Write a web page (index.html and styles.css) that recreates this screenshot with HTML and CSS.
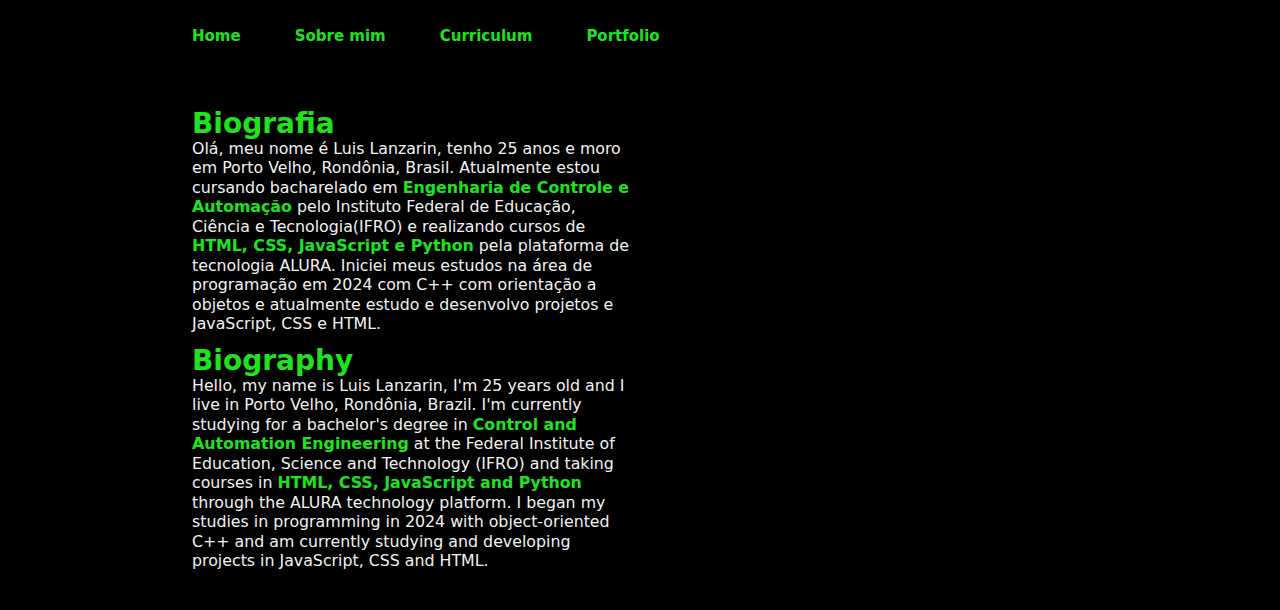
FILE: index.html
```html
<!DOCTYPE html>
<html lang="pt-BR">
<head>
<meta charset="utf-8">
<title>Luis Lanzarin</title>
<link rel="stylesheet" href="styles.css">
</head>
<body>
<header class="cabecalho">
  <nav class="menu">
    <a class="menu__link" href="#">Home</a>
    <a class="menu__link" href="#">Sobre mim</a>
    <a class="menu__link" href="#">Curriculum</a>
    <a class="menu__link" href="#">Portfolio</a>
  </nav>
</header>
<main class="conteudo">
  <section class="bio">
    <h1 class="bio__titulo">Biografia</h1>
    <p class="bio__texto">Olá, meu nome é Luis Lanzarin, tenho 25 anos e moro em Porto Velho, Rondônia, Brasil. Atualmente estou cursando bacharelado em <strong class="destaque">Engenharia de Controle e Automação</strong> pelo Instituto Federal de Educação, Ciência e Tecnologia(IFRO) e realizando cursos de <strong class="destaque">HTML, CSS, JavaScript e Python</strong> pela plataforma de tecnologia ALURA. Iniciei meus estudos na área de programação em 2024 com C++ com orientação a objetos e atualmente estudo e desenvolvo projetos e JavaScript, CSS e HTML.</p>
    <h2 class="bio__titulo bio__titulo--segundo">Biography</h2>
    <p class="bio__texto">Hello, my name is Luis Lanzarin, I'm 25 years old and I live in Porto Velho, Rondônia, Brazil. I'm currently studying for a bachelor's degree in <strong class="destaque">Control and Automation Engineering</strong> at the Federal Institute of Education, Science and Technology (IFRO) and taking courses in <strong class="destaque">HTML, CSS, JavaScript and Python</strong> through the ALURA technology platform. I began my studies in programming in 2024 with object-oriented C++ and am currently studying and developing projects in JavaScript, CSS and HTML.</p>
  </section>
</main>
</body>
</html>
```

FILE: styles.css
```css
html, body {
  margin: 0;
  padding: 0;
  background: #000;
  height: 100%;
}

body {
  font-family: "DejaVu Sans", "Noto Sans", sans-serif;
  color: #f2f2f2;
}

.cabecalho {
  padding: 27px 0 0 192px;
}

.menu {
  display: flex;
  gap: 54px;
}

.menu__link {
  color: #1ee31e;
  text-decoration: none;
  font-weight: 600;
  font-size: 15px;
  line-height: 19.5px;
}

.conteudo {
  padding: 58px 0 0 192px;
}

.bio {
  width: 440px;
}

.bio__titulo {
  margin: 0;
  padding-top: 4px;
  color: #1ee31e;
  font-family: "DejaVu Sans", sans-serif;
  font-weight: 700;
  font-size: 28px;
  line-height: 30px;
}

.bio__titulo--segundo {
  margin-top: 8px;
}

.bio__texto {
  margin: 0;
  font-size: 15.8px;
  line-height: 19.5px;
}

.destaque {
  color: #1ee31e;
  font-weight: 600;
}
```
